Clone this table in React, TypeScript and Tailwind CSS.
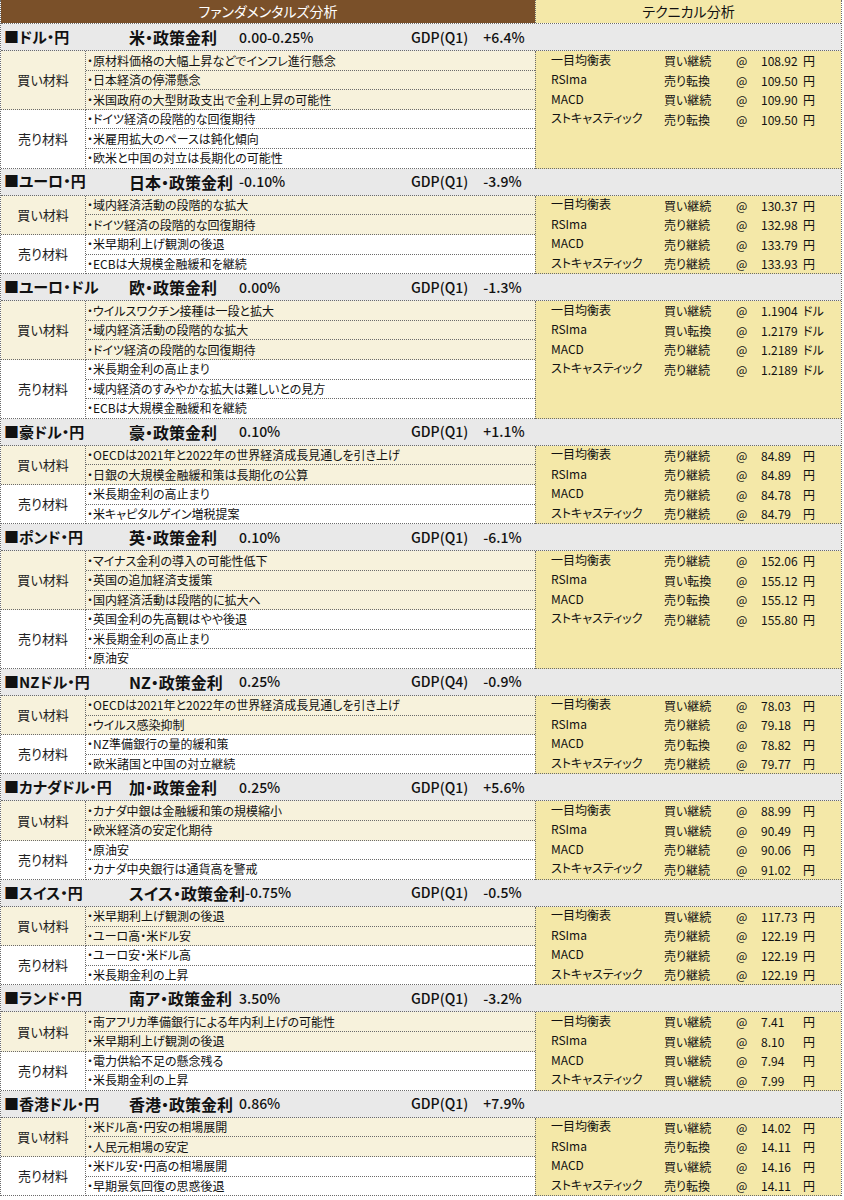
import React from 'react'

type TechRow = [string, string]

interface PairSection {
  pair: string
  policy: string
  rate: string
  gdp: string
  quarter: string
  unit: string
  buy: string[]
  sell: string[]
  tech: TechRow[]
}

const TECH_NAMES = ['一目均衡表', 'RSIma', 'MACD', 'ストキャスティック']

const sections: PairSection[] = [
  {
    pair: '■ドル・円',
    policy: '米・政策金利',
    rate: '0.00-0.25%',
    quarter: 'Q1',
    gdp: '+6.4%',
    unit: '円',
    buy: ['・原材料価格の大幅上昇などでインフレ進行懸念', '・日本経済の停滞懸念', '・米国政府の大型財政支出で金利上昇の可能性'],
    sell: ['・ドイツ経済の段階的な回復期待', '・米雇用拡大のペースは鈍化傾向', '・欧米と中国の対立は長期化の可能性'],
    tech: [
      ['買い継続', '108.92'],
      ['売り転換', '109.50'],
      ['買い継続', '109.90'],
      ['売り転換', '109.50'],
    ],
  },
  {
    pair: '■ユーロ・円',
    policy: '日本・政策金利',
    rate: '-0.10%',
    quarter: 'Q1',
    gdp: '-3.9%',
    unit: '円',
    buy: ['・域内経済活動の段階的な拡大', '・ドイツ経済の段階的な回復期待'],
    sell: ['・米早期利上げ観測の後退', '・ECBは大規模金融緩和を継続'],
    tech: [
      ['買い継続', '130.37'],
      ['売り継続', '132.98'],
      ['売り継続', '133.79'],
      ['売り継続', '133.93'],
    ],
  },
  {
    pair: '■ユーロ・ドル',
    policy: '欧・政策金利',
    rate: '0.00%',
    quarter: 'Q1',
    gdp: '-1.3%',
    unit: 'ドル',
    buy: ['・ウイルスワクチン接種は一段と拡大', '・域内経済活動の段階的な拡大', '・ドイツ経済の段階的な回復期待'],
    sell: ['・米長期金利の高止まり', '・域内経済のすみやかな拡大は難しいとの見方', '・ECBは大規模金融緩和を継続'],
    tech: [
      ['買い継続', '1.1904'],
      ['買い転換', '1.2179'],
      ['売り継続', '1.2189'],
      ['売り継続', '1.2189'],
    ],
  },
  {
    pair: '■豪ドル・円',
    policy: '豪・政策金利',
    rate: '0.10%',
    quarter: 'Q1',
    gdp: '+1.1%',
    unit: '円',
    buy: ['・OECDは2021年と2022年の世界経済成長見通しを引き上げ', '・日銀の大規模金融緩和策は長期化の公算'],
    sell: ['・米長期金利の高止まり', '・米キャピタルゲイン増税提案'],
    tech: [
      ['売り継続', '84.89'],
      ['売り継続', '84.89'],
      ['売り継続', '84.78'],
      ['売り継続', '84.79'],
    ],
  },
  {
    pair: '■ポンド・円',
    policy: '英・政策金利',
    rate: '0.10%',
    quarter: 'Q1',
    gdp: '-6.1%',
    unit: '円',
    buy: ['・マイナス金利の導入の可能性低下', '・英国の追加経済支援策', '・国内経済活動は段階的に拡大へ'],
    sell: ['・英国金利の先高観はやや後退', '・米長期金利の高止まり', '・原油安'],
    tech: [
      ['売り継続', '152.06'],
      ['買い転換', '155.12'],
      ['売り転換', '155.12'],
      ['売り継続', '155.80'],
    ],
  },
  {
    pair: '■NZドル・円',
    policy: 'NZ・政策金利',
    rate: '0.25%',
    quarter: 'Q4',
    gdp: '-0.9%',
    unit: '円',
    buy: ['・OECDは2021年と2022年の世界経済成長見通しを引き上げ', '・ウイルス感染抑制'],
    sell: ['・NZ準備銀行の量的緩和策', '・欧米諸国と中国の対立継続'],
    tech: [
      ['買い継続', '78.03'],
      ['売り継続', '79.18'],
      ['売り転換', '78.82'],
      ['売り継続', '79.77'],
    ],
  },
  {
    pair: '■カナダドル・円',
    policy: '加・政策金利',
    rate: '0.25%',
    quarter: 'Q1',
    gdp: '+5.6%',
    unit: '円',
    buy: ['・カナダ中銀は金融緩和策の規模縮小', '・欧米経済の安定化期待'],
    sell: ['・原油安', '・カナダ中央銀行は通貨高を警戒'],
    tech: [
      ['買い継続', '88.99'],
      ['買い継続', '90.49'],
      ['売り継続', '90.06'],
      ['売り継続', '91.02'],
    ],
  },
  {
    pair: '■スイス・円',
    policy: 'スイス・政策金利',
    rate: '-0.75%',
    quarter: 'Q1',
    gdp: '-0.5%',
    unit: '円',
    buy: ['・米早期利上げ観測の後退', '・ユーロ高・米ドル安'],
    sell: ['・ユーロ安・米ドル高', '・米長期金利の上昇'],
    tech: [
      ['買い継続', '117.73'],
      ['売り継続', '122.19'],
      ['売り継続', '122.19'],
      ['売り継続', '122.19'],
    ],
  },
  {
    pair: '■ランド・円',
    policy: '南ア・政策金利',
    rate: '3.50%',
    quarter: 'Q1',
    gdp: '-3.2%',
    unit: '円',
    buy: ['・南アフリカ準備銀行による年内利上げの可能性', '・米早期利上げ観測の後退'],
    sell: ['・電力供給不足の懸念残る', '・米長期金利の上昇'],
    tech: [
      ['買い継続', '7.41'],
      ['買い継続', '8.10'],
      ['買い継続', '7.94'],
      ['買い継続', '7.99'],
    ],
  },
  {
    pair: '■香港ドル・円',
    policy: '香港・政策金利',
    rate: '0.86%',
    quarter: 'Q1',
    gdp: '+7.9%',
    unit: '円',
    buy: ['・米ドル高・円安の相場展開', '・人民元相場の安定'],
    sell: ['・米ドル安・円高の相場展開', '・早期景気回復の思惑後退'],
    tech: [
      ['買い継続', '14.02'],
      ['売り転換', '14.11'],
      ['買い継続', '14.16'],
      ['売り転換', '14.11'],
    ],
  },
]

function MaterialBlock({ label, items, buy }: { label: string; items: string[]; buy: boolean }) {
  return (
    <div className={`flex ${buy ? 'bg-[#f7f2dc]' : 'bg-white'}`}>
      <div className="w-[85px] shrink-0 flex items-center justify-center border-r border-b border-dotted border-[#6b6b6b] text-[13px] text-[#222]">
        {label}
      </div>
      <div className="flex-1">
        {items.map((item, i) => (
          <div
            key={i}
            className="h-[19.55px] flex items-center pl-[1px] text-[12px] leading-none text-[#111] whitespace-nowrap border-b border-dotted border-[#6b6b6b]"
          >
            {item}
          </div>
        ))}
      </div>
    </div>
  )
}

function Section({ s }: { s: PairSection }) {
  return (
    <div>
      {/* pair header */}
      <div className="h-[27.3px] flex items-center bg-[#e9e9e9] border-b border-dotted border-[#6b6b6b] text-[#111] whitespace-nowrap">
        <div className="w-[128px] pl-[3px] text-[15px] font-bold">{s.pair}</div>
        <div className="w-[282px] flex items-center">
          <span className="min-w-[110px] text-[16px] font-bold">{s.policy}</span>
          <span className="text-[14px] font-medium">{s.rate}</span>
        </div>
        <div className="text-[14px] font-medium">
          GDP({s.quarter}) <span className="ml-[12px]">{s.gdp}</span>
        </div>
      </div>

      <div className="flex">
        <div className="w-[534px] shrink-0">
          <MaterialBlock label="買い材料" items={s.buy} buy />
          <MaterialBlock label="売り材料" items={s.sell} buy={false} />
        </div>

        {/* technical panel: height follows the materials column */}
        <div className="flex-1 bg-[#f4e8a8] border-l border-b border-dotted border-[#6b6b6b] text-[12px] text-[#111]">
          <div className="h-0">
            {s.tech.map((t, i) => (
              <div key={i} className="h-[19.55px] flex items-center whitespace-nowrap leading-none">
                <span className="w-[128px] pl-[15px] -mt-[3px]">{TECH_NAMES[i]}</span>
                <span className="w-[72px]">{t[0]}</span>
                <span className="w-[25px]">@</span>
                <span className="w-[42px]">{t[1]}</span>
                <span>{s.unit}</span>
              </div>
            ))}
          </div>
        </div>
      </div>
    </div>
  )
}

export default function App() {
  return (
    <div className="w-[844px] h-[1200px] bg-white overflow-hidden font-['Noto_Sans_CJK_JP','Noto_Sans',sans-serif] [font-feature-settings:'palt']">
      <div className="w-[842px] border-x border-dotted border-[#6b6b6b]">
        {/* top header */}
        <div className="h-[24px] flex border-b border-dotted border-[#6b6b6b]">
          <div className="w-[534px] shrink-0 bg-[#7a5029] flex items-center justify-center text-[14px] text-white">
            ファンダメンタルズ分析
          </div>
          <div className="flex-1 bg-[#f4e8a8] border-l border-dotted border-[#6b6b6b] flex items-center justify-center text-[14px] text-[#111]">
            テクニカル分析
          </div>
        </div>

        {sections.map((s, i) => (
          <Section key={i} s={s} />
        ))}
      </div>
    </div>
  )
}
